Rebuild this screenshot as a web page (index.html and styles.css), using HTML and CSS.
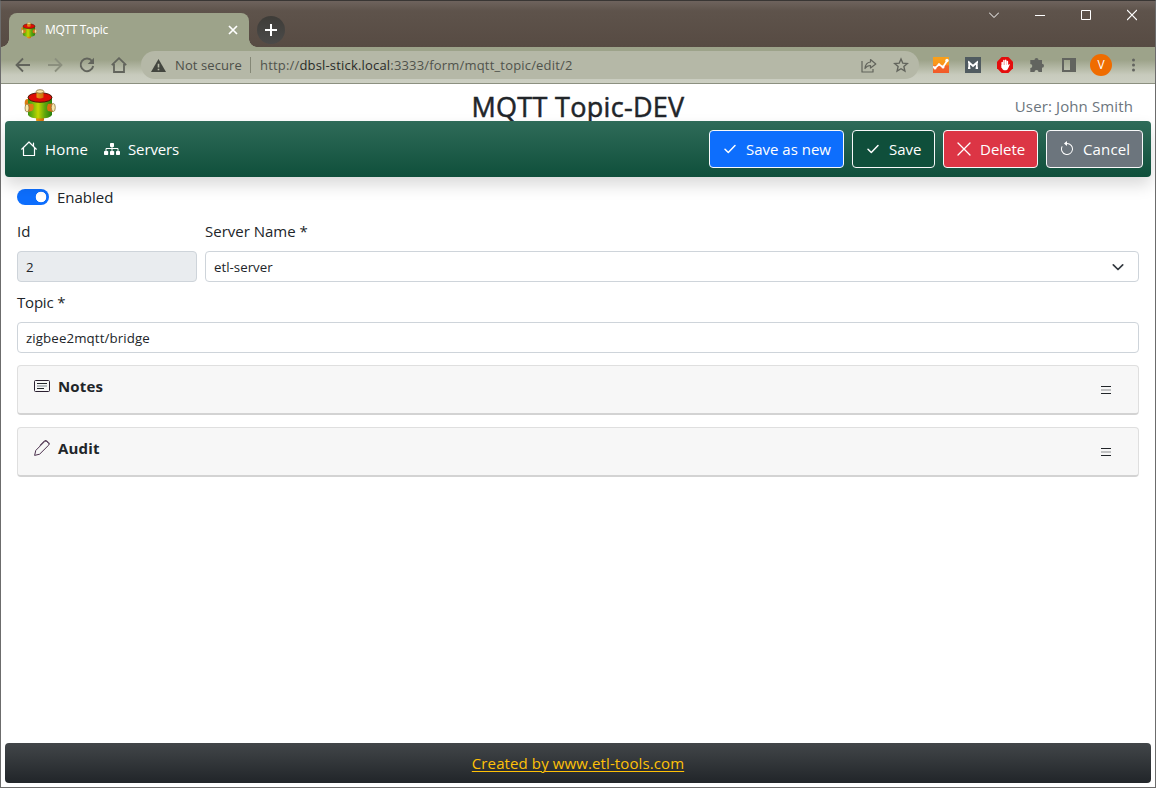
FILE: index.html
```html
<!DOCTYPE html>
<html lang="en">
<head>
<meta charset="utf-8">
<title>MQTT Topic</title>
<link rel="stylesheet" href="styles.css">
</head>
<body>
<svg class="defs" width="0" height="0" aria-hidden="true">
  <defs>
    <linearGradient id="green"><stop offset="0" stop-color="#3d9412"/><stop offset=".15" stop-color="#62b010"/><stop offset=".42" stop-color="#c3d600"/><stop offset=".7" stop-color="#5fa60e"/><stop offset="1" stop-color="#24800f"/></linearGradient>
    <linearGradient id="orange"><stop offset="0" stop-color="#e89a18"/><stop offset="1" stop-color="#d06c08"/></linearGradient>
    <linearGradient id="chart" x2="0" y2="1"><stop offset="0" stop-color="#f9a11b"/><stop offset=".5" stop-color="#f9941e"/><stop offset=".55" stop-color="#f4662a"/><stop offset="1" stop-color="#f15a29"/></linearGradient>
    <symbol id="barrel" viewBox="0 0 32 34">
      <path d="M12 27h8v4.500q-4 3-8 0z" fill="url(#orange)"/>
      <ellipse cx="3.500" cy="14" rx="2.800" ry="4" fill="#dc7d10"/>
      <path d="M4 8v18q2 3.500 12 3.500t12-3.500V8z" fill="url(#green)"/>
      <ellipse cx="16" cy="8.500" rx="12" ry="4.800" fill="#dc0d05" stroke="#3e1506" stroke-width=".9"/>
      <path d="M12.500 2.500h7v6q-3.500 2-7 0z" fill="url(#orange)"/>
      <ellipse cx="16" cy="2.500" rx="3.800" ry="1.800" fill="#f8e6a5" stroke="#806a35" stroke-width=".8"/>
      <path d="M3 14.500l6 .5q2 4-1 7l-5 1z" fill="#e07a16"/>
      <ellipse cx="3" cy="19" rx="2" ry="4" fill="#f9e8ac" stroke="#806a35" stroke-width=".7"/>
      <path d="M29 14.500l-5 .5q-2 4 0 7l5 1z" fill="#d97010"/>
      <ellipse cx="29.300" cy="18.500" rx="2" ry="4" fill="#f9e8ac" stroke="#806a35" stroke-width=".7"/>
    </symbol>
    <symbol id="check" viewBox="0 0 16 16"><path d="M3 8.200l3.300 3.300L13 4.600" fill="none" stroke="currentColor" stroke-width="1.500" stroke-linecap="round" stroke-linejoin="round"/></symbol>
    <symbol id="menu" viewBox="0 0 10 8"><path d="M0 .5h10M0 7.500h10" stroke="#212529"/><path d="M0 4h10" stroke="#c1c2c3" stroke-width="2"/></symbol>
  </defs>
</svg>
<div class="window">
  <header class="titlebar">
    <div class="tab">
      <svg class="favicon" width="16" height="17"><use href="#barrel"/></svg>
      <span class="tab-title">MQTT Topic</span>
      <svg class="tab-close" width="10" height="10" viewBox="0 0 10 10"><path d="M1 1l8 8M9 1L1 9" stroke="#fff" stroke-width="1.700"/></svg>
    </div>
    <div class="new-tab"><svg width="12" height="12" viewBox="0 0 12 12"><path d="M6 0v12M0 6h12" stroke="#fff" stroke-width="2"/></svg></div>
    <div class="window-controls">
      <svg width="10" height="12" viewBox="0 0 10 12"><path d="M0 3.500l5 5 5-5" fill="none" stroke="#fff"/></svg>
      <svg width="10" height="12" viewBox="0 0 10 12"><path d="M0 6.500h10" stroke="#fff"/></svg>
      <svg width="10" height="12" viewBox="0 0 10 12"><path d="M.5 1.500h9v9h-9z" fill="none" stroke="#fff"/></svg>
      <svg width="10" height="12" viewBox="0 0 10 12"><path d="M0 1l10 10M10 1L0 11" stroke="#fff" stroke-width="1.200"/></svg>
    </div>
  </header>
  <div class="toolbar">
    <div class="nav-buttons">
      <svg width="16" height="16" viewBox="0 0 16 16"><path d="M15 8H2M8 1.500L1.500 8 8 14.500" fill="none" stroke="#62645c" stroke-width="1.800"/></svg>
      <svg width="16" height="16" viewBox="0 0 16 16"><path d="M1 8h13M8 1.500L14.500 8 8 14.500" fill="none" stroke="#8b8f7e" stroke-width="1.800"/></svg>
      <svg width="16" height="16" viewBox="0 0 16 16"><path d="M13 4A6.300 6.300 0 1 0 14.200 9" fill="none" stroke="#62645c" stroke-width="1.900"/><path d="M15 .8v6.300H8.700z" fill="#62645c"/></svg>
      <svg width="16" height="16" viewBox="0 0 16 16"><path d="M.8 8.200L8 1.200l7.200 7M3 7v8h10V7" fill="none" stroke="#62645c" stroke-width="1.800"/></svg>
    </div>
    <div class="address">
      <svg width="15" height="13" viewBox="0 0 15 13"><path d="M7.500 0L15 13H0z" fill="#43463f"/><path d="M6.700 4.700h1.600v3.800H6.700zM6.700 9.700h1.600v1.500H6.700z" fill="#b6b9a7"/></svg>
      <span class="insecure">Not secure</span>
      <span class="url">http://<b>dbsl-stick.local</b>:3333/form/mqtt_topic/edit/2</span>
      <svg class="share" width="16" height="16" viewBox="0 0 16 16"><path d="M1 4v11h11v-3M9.500 2.500L14.800 7l-5.300 4V8.500Q6 8.500 4 11.500 4.500 5.500 9.500 5z" fill="none" stroke="#62645c" stroke-width="1.200" stroke-linejoin="round"/></svg>
      <svg class="star" width="16" height="16" viewBox="0 0 16 16"><path d="M8 2l1.800 4.200 4.500.4-3.400 3 1 4.400L8 11.700 4.100 14l1-4.400-3.400-3 4.500-.4z" fill="none" stroke="#62645c" stroke-width="1.400"/></svg>
    </div>
    <div class="extensions">
      <svg width="16" height="16" viewBox="0 0 16 16"><path d="M0 0h16v16H0z" fill="url(#chart)"/><path d="M0 9.500l2 1.500 4-3.500 4 2.500 4-6" fill="none" stroke="#fff" stroke-width="1.700"/><circle cx="2" cy="11" r="1.500" fill="#fff"/><circle cx="6" cy="7.500" r="1.300" fill="#fff"/><circle cx="10" cy="10" r="1.500" fill="#fff"/><circle cx="14" cy="3.500" r="1.700" fill="#fff"/></svg>
      <svg width="16" height="16" viewBox="0 0 16 16"><path d="M0 0h16v16H0z" fill="#505b60"/><path d="M4.200 11.500V5.500L8 9l3.800-3.500v6M3 11.200h2.400M10.600 11.200H13M3 5.200h1.700M11.500 5.200H13" fill="none" stroke="#fff" stroke-width="1.800"/></svg>
      <svg width="16" height="16" viewBox="0 0 16 16"><path d="M4.700 0h6.600L16 4.700v6.600L11.300 16H4.700L0 11.300V4.700z" fill="#e40d0d"/><path d="M5.200 5.500v5M6.900 3.500v6M8.700 3.200v6M10.400 4.500v6" stroke="#fff" stroke-width="1.500" stroke-linecap="round"/><path d="M4.500 8h6.600l1.200-1q.9.200.2 1.200l-2 4.200q-2.400 1.800-4.700 0-1.300-1.300-1.300-4.400z" fill="#fff"/></svg>
      <svg width="16" height="16" viewBox="0 0 16 16"><path d="M2 3h3.500a2 2 0 1 1 4 0H13v3.800a2 2 0 1 1 0 4V15H9.500a2 2 0 0 0-4 0H1.300v-4a2 2 0 0 0 0-4V3z" fill="#62645f"/></svg>
      <svg width="16" height="16" viewBox="0 0 16 16"><path d="M2 2h12v12H2z" fill="none" stroke="#62645f" stroke-width="2"/><path d="M9 2h5v12H9z" fill="#62645f"/></svg>
      <span class="avatar">V</span>
      <svg width="16" height="16" viewBox="0 0 16 16"><g fill="#62645f"><circle cx="8.500" cy="3" r="1.500"/><circle cx="8.500" cy="8" r="1.500"/><circle cx="8.500" cy="13" r="1.500"/></g></svg>
    </div>
  </div>
  <main class="page">
    <div class="page-header">
      <svg class="logo" width="32" height="34"><use href="#barrel"/></svg>
      <h1>MQTT Topic-DEV</h1>
      <span class="user">User: John Smith</span>
    </div>
    <nav class="navbar">
      <a class="nav-link home"><svg width="16" height="16" viewBox="0 0 16 16"><path d="M.7 8.200L8 1l7.300 7.200M2.500 6.800v7.700h11V6.800M12.500 5V2" fill="none" stroke="#fff" stroke-width="1.200" stroke-linejoin="round" stroke-linecap="round"/></svg><span>Home</span></a>
      <a class="nav-link servers"><svg width="16" height="16" viewBox="0 0 16 16"><path d="M8 4v6M2 10V7.500h12V10" fill="none" stroke="#fff"/><g fill="#fff"><rect x="6" y="2" width="4" height="4" rx=".7"/><rect y="10" width="4.200" height="4" rx=".7"/><rect x="6" y="10" width="4.200" height="4" rx=".7"/><rect x="12" y="10" width="4" height="4" rx=".7"/></g></svg><span>Servers</span></a>
      <div class="actions">
        <button class="btn btn-primary"><svg width="16" height="16"><use href="#check"/></svg><span>Save as new</span></button>
        <button class="btn btn-save"><svg width="16" height="16"><use href="#check"/></svg><span>Save</span></button>
        <button class="btn btn-delete"><svg width="16" height="16" viewBox="0 0 16 16"><path d="M2 2l12 12M14 2L2 14" stroke="#fff" stroke-width="1.300" stroke-linecap="round"/></svg><span>Delete</span></button>
        <button class="btn btn-cancel"><svg width="16" height="16" viewBox="0 0 16 16"><path d="M8 3a5 5 0 1 1-4.546 2.914.5.5 0 0 0-.908-.417A6 6 0 1 0 8 2zM8 4.466V.534a.25.25 0 0 0-.41-.192L5.230 2.308a.25.25 0 0 0 0 .384l2.360 1.966A.25.25 0 0 0 8 4.466z" fill="#fff"/></svg><span>Cancel</span></button>
      </div>
    </nav>
    <form class="form">
      <div class="switch-row"><span class="switch"></span><span class="enabled">Enabled</span></div>
      <div class="fields">
        <div class="field"><label>Id</label><div class="control disabled"><span>2</span></div></div>
        <div class="field"><label>Server Name *</label><div class="control"><span class="server-value">etl-server</span><svg class="caret" width="12" height="12" viewBox="0 0 12 12"><path d="M1.300 3.800L6 8.500l4.700-4.700" fill="none" stroke="#343a40" stroke-width="1.700" stroke-linecap="round" stroke-linejoin="round"/></svg></div></div>
      </div>
      <div class="field"><label class="topic-label">Topic *</label><div class="control"><span class="topic-value">zigbee2mqtt/bridge</span></div></div>
      <section class="card">
        <svg width="16" height="16" viewBox="0 0 16 16"><rect x=".5" y="2.500" width="15" height="11" rx="1" fill="none" stroke="#2a2030"/><path d="M3 5.500h10M3 10.500h7" stroke="#212529"/><path d="M3 8h10" stroke="#b9bdc2" stroke-width="2"/></svg>
        <h2 class="notes">Notes</h2><svg class="menu" width="10" height="8"><use href="#menu"/></svg>
      </section>
      <section class="card">
        <svg width="16" height="16" viewBox="0 0 16 16"><path d="M.6 15.400l1.200-5L11 1.200q1.200-1 2.300 0l1.500 1.500q1 1.100 0 2.300L5.600 14.200zM6 5.300l4.500-4.500h1.500l3 3" fill="none" stroke="#4a2f4c" stroke-width="1"/></svg>
        <h2 class="audit">Audit</h2><svg class="menu" width="10" height="8"><use href="#menu"/></svg>
      </section>
    </form>
    <footer class="footer"><a>Created by www.etl-tools.com</a></footer>
  </main>
</div>
</body>
</html>
```
FILE: styles.css
```css
* { box-sizing: border-box; }
body { margin: 0; font: 15px/24px "Open Sans", "Noto Sans", sans-serif; color: #212529; background: #fff; }
svg { display: block; flex: none; }
.defs { position: absolute; }
span, h1, h2, label, a { white-space: nowrap; }
.window { width: 1156px; height: 788px; display: flex; flex-direction: column; border: 1px solid #6c6c6c; border-top-color: #393634; overflow: hidden; }

.titlebar { height: 46px; flex: none; display: flex; background: linear-gradient(#6e635d, #5e534b 10px, #574b43); padding: 12px 18px 0 8px; }
.tab { position: relative; width: 240px; height: 34px; border-radius: 8px 8px 0 0; background: #9da38a; display: flex; align-items: center; padding: 0 11px 0 12px; }
.tab::before, .tab::after { content: ""; position: absolute; bottom: 0; width: 8px; height: 8px; }
.tab::before { left: -8px; background: radial-gradient(circle at 0 0, transparent 7.5px, #9da38a 8px); }
.tab::after { right: -8px; background: radial-gradient(circle at 100% 0, transparent 7.5px, #9da38a 8px); }
.tab-title { margin-left: 8px; font-size: 12px; letter-spacing: -.35px; color: #fff; }
.tab-close { margin-left: auto; }
.new-tab { width: 28px; height: 28px; margin: 3px 0 0 8px; border-radius: 50%; background: linear-gradient(#3e3c38, #4b4a49); display: grid; place-items: center; }
.window-controls { margin-left: auto; display: flex; gap: 36px; height: 4px; align-items: center; }

.toolbar { height: 37px; flex: none; display: flex; align-items: center; background: linear-gradient(#9da38a 13px, #c8cbbd 28px, #cccfc2); border-bottom: 1px solid #8c9080; padding-left: 14px; }
.nav-buttons { display: flex; gap: 16px; }
.address { margin-left: 14px; width: 778px; height: 28px; border-radius: 14px; background: #b5b8a7; display: flex; align-items: center; padding: 0 10px; font-size: 13px; }
.insecure { margin-left: 9px; width: 76px; height: 16px; line-height: 16px; border-right: 1px solid #858877; color: #4c4f49; letter-spacing: .1px; }
.url { margin-left: 9px; color: #50534c; letter-spacing: .18px; }
.url b { font-weight: 400; color: #292b28; }
.share { margin-left: auto; }
.star { margin-left: 16px; }
.extensions { display: flex; align-items: center; gap: 16px; margin-left: 14px; }
.avatar { width: 22px; height: 22px; margin: 0 -3px; border-radius: 50%; background: #ef6c00; color: #fff; font-size: 12px; line-height: 22px; text-align: center; }

.page { flex: 1; display: flex; flex-direction: column; padding: 0 4px 4px; }
.page-header { height: 37px; display: grid; grid-template-columns: 1fr auto 1fr; align-items: center; padding: 0 18px 0 19px; }
.logo { margin-top: 4px; }
h1 { margin: 6px 1px 0 0; font-size: 27px; line-height: 34px; font-weight: 500; letter-spacing: .3px; -webkit-text-stroke: .5px #212529; }
.user { justify-self: end; margin-top: 4px; color: #6c757d; letter-spacing: .12px; }
.navbar { position: relative; height: 56px; flex: none; border-radius: 4px; background: linear-gradient(#2f6b59, #0f4f3b); box-shadow: 0 8px 16px rgba(0,0,0,.15); color: #fff; display: flex; align-items: center; padding: 0 8px 0 16px; gap: 16px; }
.nav-link { display: flex; align-items: center; gap: 8px; }
.home { width: 67px; letter-spacing: .2px; }
.servers { letter-spacing: -.12px; }
.actions { margin-left: auto; display: flex; gap: 8px; }
.btn { height: 38px; border: 1px solid #f8f9fa; border-radius: 4px; color: #fff; font: inherit; padding: 0 0 0 12px; display: flex; align-items: center; gap: 8px; }
.btn-primary { width: 135px; background: #0d6efd; }
.btn-save { width: 83px; background: #0f4f3b; }
.btn-delete { width: 95px; background: #dc3545; }
.btn-cancel { width: 97px; background: #6c757d; letter-spacing: .15px; }

.form { padding: 8px 12px 0; display: flex; flex-direction: column; }
.switch-row { display: flex; align-items: center; gap: 8px; height: 24px; margin-bottom: 10px; }
.switch { width: 32px; height: 16px; border-radius: 8px; background: radial-gradient(circle at 24px 8px, #fff 5px, #0d6efd 5.6px); }
.fields { display: grid; grid-template-columns: 180px 1fr; gap: 8px; margin-bottom: 8px; }
.field { display: flex; flex-direction: column; }
.field label { height: 24px; margin-bottom: 8px; }
.field .topic-label { letter-spacing: -.2px; }
.control { height: 31px; border: 1px solid #ced4da; border-radius: 4px; padding: 0 14px 0 8px; display: flex; align-items: center; justify-content: space-between; font-size: 13.3px; }
.topic-value { letter-spacing: .1px; }
.disabled { background: #e9ecef; }
.card { height: 50px; margin-top: 12px; border: 1px solid #dfdfdf; border-bottom: 2px solid #d3d3d3; border-radius: 4px; background: #f7f7f7; display: flex; align-items: flex-start; padding: 12px 27px 0 16px; }
.card h2 { margin: -4px 0 0 8px; font-size: 15px; line-height: 24px; font-weight: 700; letter-spacing: .15px; }
.card .menu { margin: 8px 0 0 auto; }
.footer { margin-top: auto; height: 40px; border-radius: 4px; background: linear-gradient(#424649, #212529); display: grid; place-items: center; color: #ffc107; }
.footer a { letter-spacing: .11px; text-decoration: underline; text-underline-offset: 2px; text-decoration-thickness: 1px; }
```
